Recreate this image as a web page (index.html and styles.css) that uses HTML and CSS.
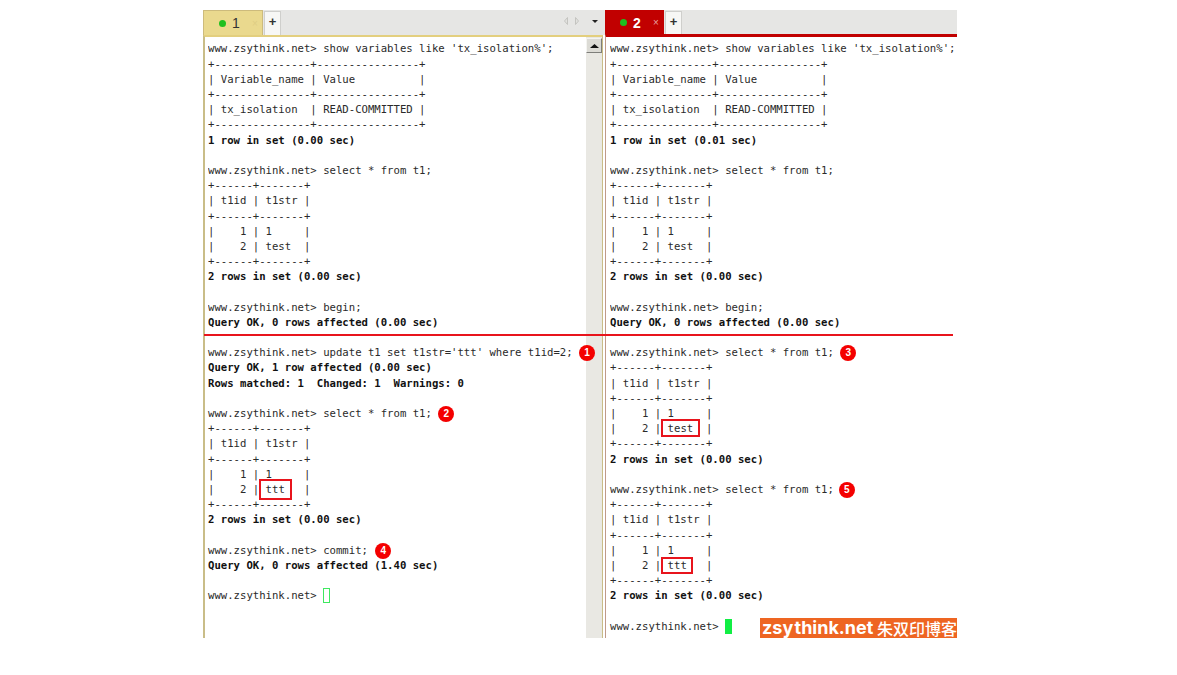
FILE: index.html
```html
<!DOCTYPE html>
<html lang="en">
<head>
<meta charset="utf-8">
<title>MySQL sessions</title>
<link rel="stylesheet" href="styles.css">
</head>
<body>
<main class="window">
  <section class="pane pane-left">
    <header class="tabbar">
      <div class="tab tab-yellow"><span class="dot"></span><span class="tab-num">1</span><span class="tab-x tab-x-faint">×</span></div>
      <div class="tab-add">+</div>
      <div class="tab-tools">
        <svg width="16" height="8" viewBox="0 0 16 8"><path d="M3.5 .5v7L.5 4zM11.5 .5v7l3-3.500z" fill="#e2e2df" stroke="#c4c4c0" stroke-width="1"/></svg>
        <svg width="6" height="3" viewBox="0 0 6 3"><path d="M0 0h6L3 3z" fill="#222"/></svg>
      </div>
    </header>
    <div class="body body-yellow">
      <div class="term">
<pre class="block block-top">www.zsythink.net&gt; show variables like 'tx_isolation%';
+---------------+----------------+
| Variable_name | Value          |
+---------------+----------------+
| tx_isolation  | READ-COMMITTED |
+---------------+----------------+
<b>1 row in set (0.00 sec)</b>

www.zsythink.net&gt; select * from t1;
+------+-------+
| t1id | t1str |
+------+-------+
|    1 | 1     |
|    2 | test  |
+------+-------+
<b>2 rows in set (0.00 sec)</b>

www.zsythink.net&gt; begin;
<b>Query OK, 0 rows affected (0.00 sec)</b></pre>
<pre class="block block-bottom">www.zsythink.net&gt; update t1 set t1str='ttt' where t1id=2; <span class="badge">1</span>
<b>Query OK, 1 row affected (0.00 sec)</b>
<b>Rows matched: 1  Changed: 1  Warnings: 0</b>

www.zsythink.net&gt; select * from t1; <span class="badge">2</span>
+------+-------+
| t1id | t1str |
+------+-------+
|    1 | 1     |
|    2 |<span class="mark mark-tall"> ttt </span>  |
+------+-------+
<b>2 rows in set (0.00 sec)</b>

www.zsythink.net&gt; commit; <span class="badge badge-right">4</span>
<b>Query OK, 0 rows affected (1.40 sec)</b>

www.zsythink.net&gt; <span class="cursor cursor-idle"></span></pre>
      </div>
      <div class="scrollbar"><div class="scroll-up"><svg width="9" height="4" viewBox="0 0 9 4"><path d="M4.500 0l4.500 4H0z" fill="#111"/></svg></div></div>
    </div>
  </section>
  <section class="pane pane-right">
    <header class="tabbar">
      <div class="tab tab-red"><span class="dot"></span><span class="tab-num">2</span><span class="tab-x">×</span></div>
      <div class="tab-add">+</div>
    </header>
    <div class="body body-red">
      <div class="term">
<pre class="block block-top">www.zsythink.net&gt; show variables like 'tx_isolation%';
+---------------+----------------+
| Variable_name | Value          |
+---------------+----------------+
| tx_isolation  | READ-COMMITTED |
+---------------+----------------+
<b>1 row in set (0.01 sec)</b>

www.zsythink.net&gt; select * from t1;
+------+-------+
| t1id | t1str |
+------+-------+
|    1 | 1     |
|    2 | test  |
+------+-------+
<b>2 rows in set (0.00 sec)</b>

www.zsythink.net&gt; begin;
<b>Query OK, 0 rows affected (0.00 sec)</b></pre>
<pre class="block block-bottom">www.zsythink.net&gt; select * from t1; <span class="badge">3</span>
+------+-------+
| t1id | t1str |
+------+-------+
|    1 | 1     |
|    2 |<span class="mark mark-wide"> test </span> |
+------+-------+
<b>2 rows in set (0.00 sec)</b>

www.zsythink.net&gt; select * from t1; <span class="badge badge-left">5</span>
+------+-------+
| t1id | t1str |
+------+-------+
|    1 | 1     |
|    2 |<span class="mark"> ttt </span>  |
+------+-------+
<b>2 rows in set (0.00 sec)</b>

www.zsythink.net&gt; <span class="cursor"></span></pre>
      </div>
    </div>
  </section>
  <div class="divider"></div>
  <div class="watermark"><span class="wm-latin">zsy think.net</span><span class="wm-cjk">朱双印博客</span></div>
</main>
</body>
</html>
```
FILE: styles.css
```css
* { box-sizing: border-box; }
html, body { margin: 0; padding: 0; background: #fff; }
body { padding: 10px 0 0 203px; }
.window {
  position: relative;
  display: flex;
  width: 754px;
  height: 628px;
}
.pane { display: flex; flex-direction: column; height: 100%; }
.pane-left { width: 402px; }
.pane-right { width: 352px; }
.tabbar {
  display: flex;
  align-items: flex-start;
  height: 25px;
  flex: none;
  background: #e6e6e4;
}
.tab {
  display: flex;
  align-items: center;
  height: 25px;
  font-family: "Liberation Sans", Arial, sans-serif;
}
.tab-yellow {
  width: 60px;
  padding-left: 15px;
  background: #ead98e;
  border: 1px solid #cdbb7c;
  border-bottom: none;
  color: #333;
}
.tab-red {
  width: 59px;
  padding-left: 15px;
  background: #c10000;
  color: #fff;
  font-weight: bold;
}
.dot { width: 7px; height: 7px; border-radius: 50%; background: #1fc01f; }
.tab-num { margin-left: 6px; font-size: 14px; width: 8px; }
.tab-x { margin-left: 12px; font-size: 10px; font-weight: normal; color: #e8a0a0; }
.tab-x-faint { color: #dfcd84; }
.tab-add {
  width: 17px;
  height: 24px;
  margin: 1px 0 0 1px;
  background: #f7f7f5;
  border: 1px solid #cfcfcc;
  border-bottom: none;
  font: bold 13px/20px "Liberation Sans", Arial, sans-serif;
  text-align: center;
  color: #333;
}
.tab-tools {
  display: flex;
  align-items: center;
  gap: 12px;
  margin-left: auto;
  margin-right: 7px;
  height: 22px;
}
.body { flex: 1; display: flex; min-height: 0; background: #fff; }
.body-yellow {
  margin-right: 2px;
  border-top: 2px solid #e3cf7e;
  border-left: 2px solid #c9bd88;
  border-right: 1px solid #c9bd88;
}
.body-red { margin-top: -1px; border-top: 3px solid #c10000; border-left: 1px solid #c09a8a; }
.term { position: relative; z-index: 1; flex: 1; min-width: 0; padding-left: 3px; }
.pane-right .term { padding-left: 4px; }
.block {
  margin: 0;
  font-family: "DejaVu Sans Mono", monospace;
  font-size: 10.63px;
  line-height: 15.2px;
  color: #2a2a2a;
  white-space: pre;
}
.block b { color: #111; font-weight: bold; }
.block-top { height: 297px; padding-top: 4.4px; overflow: hidden; }
.block-bottom { padding-top: 11.2px; }
.scrollbar { width: 16px; flex: none; background: #e9e8e3; }
.scroll-up {
  display: flex;
  align-items: center;
  justify-content: center;
  height: 15px;
  margin-top: 1px;
  background: #dcdbd5;
  border-top: 1px solid #f4f4f1;
  border-left: 1px solid #f4f4f1;
  border-right: 1px solid #7e7e7a;
  border-bottom: 1px solid #7e7e7a;
}
.badge {
  display: inline-block;
  width: 16px;
  height: 16px;
  margin: -3px 0;
  border-radius: 50%;
  background: #f40000;
  color: #fff;
  font: bold 10px/16px "Liberation Sans", Arial, sans-serif;
  text-align: center;
  vertical-align: middle;
}
.badge-left { margin-left: -1.500px; }
.badge-right { margin-left: 1px; }
.mark { position: relative; }
.mark::after {
  content: "";
  position: absolute;
  left: 0;
  right: 0;
  top: -2px;
  bottom: -2px;
  border: 2px solid #e8141c;
}
.mark-tall::after { right: -1px; top: -4px; bottom: -4px; }
.mark-wide::after { top: -3px; bottom: -2px; }
.cursor {
  display: inline-block;
  width: 7px;
  height: 15px;
  background: #11ee44;
  vertical-align: top;
}
.cursor-idle { background: transparent; border: 1px solid #3fe860; }
.divider {
  position: absolute;
  z-index: 2;
  left: 1px;
  top: 323.500px;
  width: 749px;
  height: 2px;
  background: #e8141c;
}
.watermark {
  position: absolute;
  z-index: 2;
  right: 0;
  bottom: 0;
  display: flex;
  align-items: center;
  width: 197px;
  height: 20px;
  padding-left: 2px;
  background: #ee6522;
  color: #fff;
  white-space: nowrap;
}
.wm-latin { width: 115px; flex: none; font: 700 18px/20px Inter, "Liberation Sans", sans-serif; word-spacing: -3px; }
.wm-cjk { font: 500 16px/20px "Noto Sans CJK SC", sans-serif; }
```
